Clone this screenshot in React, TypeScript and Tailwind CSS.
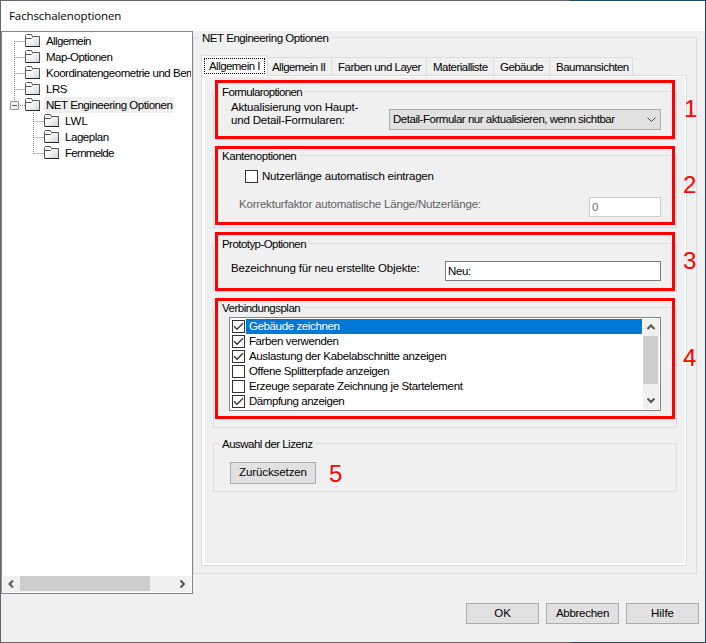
import type { ReactNode } from 'react';
import clsx from 'clsx';

interface TreeItem {
  label: string;
  level: number;
  tracking: string;
  selected?: boolean;
  expanded?: boolean;
}

interface ListItem {
  label: string;
  checked: boolean;
  tracking: string;
}

interface TabItem {
  label: string;
  className: string;
}

const treeItems: TreeItem[] = [
  { label: 'Allgemein', level: 0, tracking: 'tracking-[-0.63px]' },
  { label: 'Map-Optionen', level: 0, tracking: 'tracking-[-0.55px]' },
  { label: 'Koordinatengeometrie und Bemaßung', level: 0, tracking: 'tracking-[-0.47px]' },
  { label: 'LRS', level: 0, tracking: 'tracking-[-0.5px]' },
  { label: 'NET Engineering Optionen', level: 0, tracking: 'tracking-[-0.45px]', selected: true, expanded: true },
  { label: 'LWL', level: 1, tracking: 'tracking-normal' },
  { label: 'Lageplan', level: 1, tracking: 'tracking-[-0.45px]' },
  { label: 'Fernmelde', level: 1, tracking: 'tracking-[-0.7px]' },
];

const tabs: TabItem[] = [
  { label: 'Allgemein II', className: 'w-[64px] pl-[4px] tracking-[-0.55px]' },
  { label: 'Farben und Layer', className: 'w-[95px] pl-[6px] tracking-[-0.5px]' },
  { label: 'Materialliste', className: 'w-[67px] pl-[6px] tracking-[-0.52px]' },
  { label: 'Gebäude', className: 'w-[56px] pl-[6px] tracking-[-0.55px]' },
  { label: 'Baumansichten', className: 'w-[83px] pl-[6px] tracking-[-0.5px]' },
];

const listItems: ListItem[] = [
  { label: 'Gebäude zeichnen', checked: true, tracking: 'tracking-[-0.38px]' },
  { label: 'Farben verwenden', checked: true, tracking: 'tracking-[-0.4px]' },
  { label: 'Auslastung der Kabelabschnitte anzeigen', checked: true, tracking: 'tracking-[-0.37px]' },
  { label: 'Offene Splitterpfade anzeigen', checked: false, tracking: 'tracking-[-0.4px]' },
  { label: 'Erzeuge separate Zeichnung je Startelement', checked: false, tracking: 'tracking-[-0.35px]' },
  { label: 'Dämpfung anzeigen', checked: true, tracking: 'tracking-[-0.45px]' },
];

function FolderIcon() {
  return (
    <svg width="16" height="14" viewBox="0 0 16 14" className="block shrink-0">
      <defs>
        <linearGradient id="folder" x1="0" y1="0" x2="1" y2="1">
          <stop offset="0.3" stopColor="#ffffff" />
          <stop offset="1" stopColor="#d3d4da" />
        </linearGradient>
      </defs>
      <path d="M.5 12.5V1.5L1.5 .5H6.5L7.5 2.5H14.5V12.5Z" fill="url(#folder)" />
      <path d="M.5 12V1.5L1.5 .5H6.5L7.5 2.5H14.5V12" fill="none" stroke="#50555e" />
      <path d="M1 4.5H6.5L7.5 3.5" fill="none" stroke="#50555e" />
      <path d="M.5 12.5H15" fill="none" stroke="#22242a" />
    </svg>
  );
}

function Chevron({ dir }: { dir: 'up' | 'down' | 'left' | 'right' }) {
  const d = {
    up: 'M.5 5L4 1.5L7.5 5',
    down: 'M.5 1.5L4 5L7.5 1.5',
    left: 'M5 .5L1.5 4L5 7.5',
    right: 'M1.5 .5L5 4L1.5 7.5',
  }[dir];
  const vertical = dir === 'up' || dir === 'down';
  return (
    <svg width={vertical ? 8 : 7} height={vertical ? 7 : 8} className="block" fill="none" stroke="#555" strokeWidth="2">
      <path d={d} />
    </svg>
  );
}

function CheckBox({ checked }: { checked: boolean }) {
  return (
    <span className="block h-[13px] w-[13px] shrink-0 border border-[#333] bg-white">
      {checked && (
        <svg width="11" height="11" className="block" fill="none" stroke="#333" strokeWidth="1.3">
          <path d="M1 5.3L4 8.3L10 2.3" />
        </svg>
      )}
    </span>
  );
}

interface GroupBoxProps {
  title: string;
  className: string;
  tracking: string;
  children: ReactNode;
}

function GroupBox({ title, className, tracking, children }: GroupBoxProps) {
  return (
    <fieldset className={clsx('border border-[#dcdcdc]', className)}>
      <legend className={clsx('ml-[5px] h-[13px] px-[3px] leading-[15px]', tracking)}>{title}</legend>
      {children}
    </fieldset>
  );
}

function Button({ label, className }: { label: string; className: string }) {
  return (
    <button className={clsx('border border-[#adadad] bg-[#e1e1e1] text-center', className)}>{label}</button>
  );
}

function TreeView() {
  return (
    <div className="flex h-[563px] w-[192px] shrink-0 flex-col border border-[#828790] bg-white p-px">
      <div className="relative flex-1 overflow-hidden">
        {/* connecting lines */}
        <svg width="60" height="130" className="absolute top-0 left-0" fill="none" stroke="#808080" strokeDasharray="1 1">
          <path d="M11.5 8V68M11.5 8.5H22M11.5 24.5H22M11.5 40.5H22M11.5 56.5H22M17 72.5H22" />
          <path d="M30.5 80V121M30.5 88.5H41M30.5 104.5H41M30.5 120.5H41" />
        </svg>
        {treeItems.map(item => (
          <div
            key={item.label}
            className={clsx('relative flex h-4 items-center whitespace-nowrap', item.level === 0 ? 'pl-[22px]' : 'pl-[41px]')}
          >
            {item.expanded && (
              <span className="absolute top-[4px] left-[7px] flex h-[9px] w-[9px] items-center justify-center rounded-[1px] border border-[#919191] bg-[#f4f4f4]">
                <span className="h-px w-[5px] bg-[#3d5ba9]" />
              </span>
            )}
            <FolderIcon />
            <span className={clsx('ml-[3px] h-4 pr-[2px] pl-[2px] leading-4', item.selected && 'bg-[#efefef]', item.tracking)}>
              {item.label}
            </span>
          </div>
        ))}
      </div>
      <div className="flex h-[16px] items-center bg-[#f0f0f0]">
        <div className="flex w-[17px] justify-center"><Chevron dir="left" /></div>
        <div className="mb-px h-[15px] w-[130px] bg-[#cdcdcd]" />
        <div className="ml-auto flex w-[17px] justify-center"><Chevron dir="right" /></div>
      </div>
    </div>
  );
}

function TabStrip() {
  return (
    <div className="flex h-[20px] items-end">
      <div className="z-10 mb-[-2px] h-[22px] w-[67px] border border-b-0 border-[#dcdcdc] bg-white pt-[2px] pl-[2px]">
        <div className="h-[16px] w-[61px] border border-dotted border-black pl-[4px] leading-[14px] tracking-[-0.55px] whitespace-nowrap">
          Allgemein I
        </div>
      </div>
      {tabs.map(tab => (
        <div
          key={tab.label}
          className={clsx('h-[18px] border-t border-r border-[#dcdcdc] leading-[18px] whitespace-nowrap', tab.className)}
        >
          {tab.label}
        </div>
      ))}
    </div>
  );
}

function ConnectionList() {
  return (
    <div className="mt-[3px] ml-[15px] flex h-[94px] w-[432px] border border-[#828790] bg-white p-px">
      <div className="flex-1">
        {listItems.map((item, i) => (
          <div key={item.label} className="flex h-[15px] items-center pl-px">
            <CheckBox checked={item.checked} />
            <span
              className={clsx(
                'ml-px h-[15px] flex-1 pl-[3px] leading-[15px] whitespace-nowrap',
                i === 0 && 'bg-[#0078d7] text-white',
                item.tracking
              )}
            >
              {item.label}
            </span>
          </div>
        ))}
      </div>
      <div className="ml-px flex w-[16px] flex-col items-center bg-[#f0f0f0]">
        <div className="flex h-[17px] items-center"><Chevron dir="up" /></div>
        <div className="h-[48px] w-[15px] self-start bg-[#cdcdcd]" />
        <div className="mt-auto flex h-[17px] items-center"><Chevron dir="down" /></div>
      </div>
    </div>
  );
}

function GeneralTab() {
  return (
    <div className="h-[491px] w-[486px] border border-[#dcdcdc] bg-white pt-px pr-px pb-[2px] pl-[3px]">
      <div className="flex h-full flex-col bg-[#f0f0f0] pt-[8px] pl-[8px]">
        <GroupBox title="Formularoptionen" className="h-[55px] w-[464px]" tracking="tracking-[-0.63px]">
          <div className="flex pl-[17px]">
            <div className="mt-[3px] w-[158px] leading-[13px] tracking-[-0.18px]">
              Aktualisierung von Haupt-
              <br />
              und Detail-Formularen:
            </div>
            <div className="mt-[11px] flex h-[21px] w-[272px] items-center border border-[#adadad] bg-[#e1e1e1] pl-[3px]">
              <span className="tracking-[-0.47px] whitespace-nowrap">Detail-Formular nur aktualisieren, wenn sichtbar</span>
              <svg width="9" height="6" className="mr-[4px] ml-auto" fill="none" stroke="#444">
                <path d="M.5 .5L4.5 4.5L8.5 .5" />
              </svg>
            </div>
          </div>
        </GroupBox>

        <GroupBox title="Kantenoptionen" className="mt-[9px] h-[79px] w-[464px]" tracking="tracking-[-0.45px]">
          <div className="mt-[8px] ml-[31px] flex h-[13px] items-center">
            <CheckBox checked={false} />
            <span className="ml-[4px] leading-[13px] tracking-[-0.2px]">Nutzerlänge automatisch eintragen</span>
          </div>
          <div className="mt-[14px] ml-[25px] flex text-[#606060]">
            <span className="w-[350px] leading-[14px] tracking-[-0.2px]">Korrekturfaktor automatische Länge/Nutzerlänge:</span>
            <div className="h-[20px] w-[72px] border border-[#cccccc] bg-white pl-[2px] leading-[18px] text-[#6d6d6d]">0</div>
          </div>
        </GroupBox>

        <GroupBox title="Prototyp-Optionen" className="mt-[9px] h-[55px] w-[464px]" tracking="tracking-[-0.55px]">
          <div className="mt-[11px] ml-[17px] flex">
            <span className="w-[214px] leading-[14px] tracking-[-0.17px]">Bezeichnung für neu erstellte Objekte:</span>
            <div className="h-[20px] w-[216px] border border-[#7a7a7a] bg-white pl-[2px] leading-[18px] tracking-[-0.4px]">Neu:</div>
          </div>
        </GroupBox>

        <GroupBox title="Verbindungsplan" className="mt-[9px] h-[127px] w-[464px]" tracking="tracking-[-0.5px]">
          <ConnectionList />
        </GroupBox>

        <GroupBox title="Auswahl der Lizenz" className="mt-[9px] h-[55px] w-[464px]" tracking="tracking-[-0.52px]">
          <Button label="Zurücksetzen" className="mt-[12px] ml-[16px] block h-[22px] w-[86px] tracking-[-0.1px]" />
        </GroupBox>
      </div>
    </div>
  );
}

// red frames and numbers on top of the dialog
function Annotations() {
  return (
    <div className="pointer-events-none absolute inset-0 z-20 text-[24px] leading-[24px] text-[#ff0000]">
      <div className="absolute top-[80px] left-[215px] h-[59px] w-[460px] border-3 border-[#ff0000]" />
      <div className="absolute top-[146px] left-[215px] h-[79px] w-[460px] border-3 border-[#ff0000]" />
      <div className="absolute top-[232px] left-[215px] h-[59px] w-[460px] border-3 border-[#ff0000]" />
      <div className="absolute top-[298px] left-[215px] h-[121px] w-[460px] border-3 border-[#ff0000]" />
      <span className="absolute top-[97px] left-[684px]">1</span>
      <span className="absolute top-[173px] left-[683px]">2</span>
      <span className="absolute top-[249px] left-[683px]">3</span>
      <span className="absolute top-[346px] left-[683px]">4</span>
      <span className="absolute top-[462px] left-[329px]">5</span>
    </div>
  );
}

export default function App() {
  return (
    <div className="relative h-[643px] w-[706px] overflow-hidden bg-[linear-gradient(to_right,#666666_570px,#1f4a6b_570px)] p-px font-['Liberation_Sans',Arial,sans-serif] text-[11.5px] text-black">
      <div className="flex h-full flex-col bg-[#f0f0f0]">
        <header className="h-[30px] shrink-0 bg-white pl-[8px] font-['Open_Sans',sans-serif] text-[11.5px] leading-[30px] tracking-[-0.1px]">
          Fachschalenoptionen
        </header>

        <main className="flex h-[563px] shrink-0">
          <TreeView />
          <GroupBox title="NET Engineering Optionen" className="h-[543px] w-[504px]" tracking="tracking-[-0.45px]">
            <div className="mt-[11px] ml-[7px]">
              <TabStrip />
              <GeneralTab />
            </div>
          </GroupBox>
        </main>

        <footer className="mt-[9px] flex justify-end gap-[7px] pr-[6px]">
          <Button label="OK" className="h-[21px] w-[73px]" />
          <Button label="Abbrechen" className="h-[21px] w-[73px] tracking-[-0.27px]" />
          <Button label="Hilfe" className="h-[21px] w-[73px]" />
        </footer>
      </div>

      <Annotations />
    </div>
  );
}
